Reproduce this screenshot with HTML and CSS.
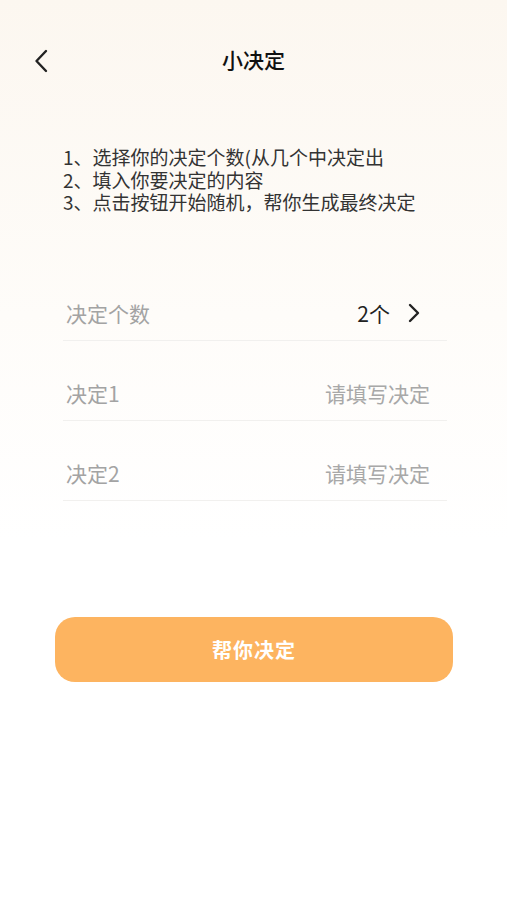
FILE: index.html
```html
<!DOCTYPE html>
<html lang="zh-CN">
<head>
    <meta charset="UTF-8">
    <meta name="viewport" content="width=device-width, initial-scale=1.0">
    <title>小决定</title>
    <link rel="stylesheet" href="styles.css">
</head>
<body>
    <header class="nav">
        <span class="nav-back">
            <svg width="14" height="24" viewBox="0 0 14 24"><path d="M12 2 L2.5 12 L12 22" fill="none" stroke="#222" stroke-width="2.4" stroke-linecap="round" stroke-linejoin="round"/></svg>
        </span>
        <h1 class="nav-title">小决定</h1>
    </header>

    <main class="page">
        <div class="intro">
            <p>1、选择你的决定个数(从几个中决定出</p>
            <p>2、填入你要决定的内容</p>
            <p>3、点击按钮开始随机，帮你生成最终决定</p>
        </div>

        <div class="form">
            <div class="row">
                <span class="label">决定个数</span>
                <span class="value">2个
                    <svg class="arrow" width="12" height="20" viewBox="0 0 12 20"><path d="M2 2 L10 10 L2 18" fill="none" stroke="#222" stroke-width="2.4" stroke-linecap="round" stroke-linejoin="round"/></svg>
                </span>
            </div>
            <div class="row">
                <span class="label">决定1</span>
                <input class="field" type="text" placeholder="请填写决定">
            </div>
            <div class="row">
                <span class="label">决定2</span>
                <input class="field" type="text" placeholder="请填写决定">
            </div>
        </div>

        <button class="btn-decide">帮你决定</button>
    </main>
</body>
</html>
```

FILE: styles.css
```css
body {
    margin: 0;
    padding: 0;
    min-height: 900px;
    font-family: "Noto Sans CJK SC", "Noto Sans", sans-serif;
    color: #333;
    background: linear-gradient(180deg, #fcf7f0 0%, #fefcf9 35%, #ffffff 60%);
}

.nav {
    position: relative;
    height: 42px;
    padding-top: 38px;
    display: flex;
    align-items: center;
    justify-content: center;
}

.nav-back {
    position: absolute;
    left: 34px;
    top: 49px;
    display: flex;
}

.nav-title {
    margin: 0;
    font-size: 21px;
    font-weight: 500;
    color: #111;
    line-height: 42px;
}

.page {
    padding: 0 60px 0 63px;
}

.intro {
    margin-top: 66px;
    font-size: 19px;
    line-height: 22.5px;
    color: #333;
}

.intro p {
    margin: 0;
}

.form {
    margin-top: 47px;
}

.row {
    height: 79px;
    box-sizing: content-box;
    border-bottom: 1px solid #f1f0ee;
    display: flex;
    align-items: flex-end;
    justify-content: space-between;
    padding: 0 3px 0 3px;
}

.label,
.value,
.field {
    font-size: 21px;
    line-height: 26px;
    margin-bottom: 14px;
}

.label {
    color: #a3a3a3;
}

.value {
    color: #222;
    display: flex;
    align-items: center;
    margin-right: 24px;
}

.value .arrow {
    margin-left: 18px;
}

.field {
    border: none;
    outline: none;
    background: transparent;
    padding: 0;
    text-align: right;
    width: 200px;
    font-family: inherit;
    color: #333;
    margin-right: 14px;
}

.field::placeholder {
    color: #a8a8a8;
}

.btn-decide {
    display: block;
    margin: 116px 0 0 -8px;
    width: 398px;
    height: 65px;
    border: none;
    border-radius: 20px;
    background-color: #fdb460;
    color: #fff;
    font-family: inherit;
    font-size: 20px;
    font-weight: 700;
    letter-spacing: 1px;
    cursor: pointer;
}
```
